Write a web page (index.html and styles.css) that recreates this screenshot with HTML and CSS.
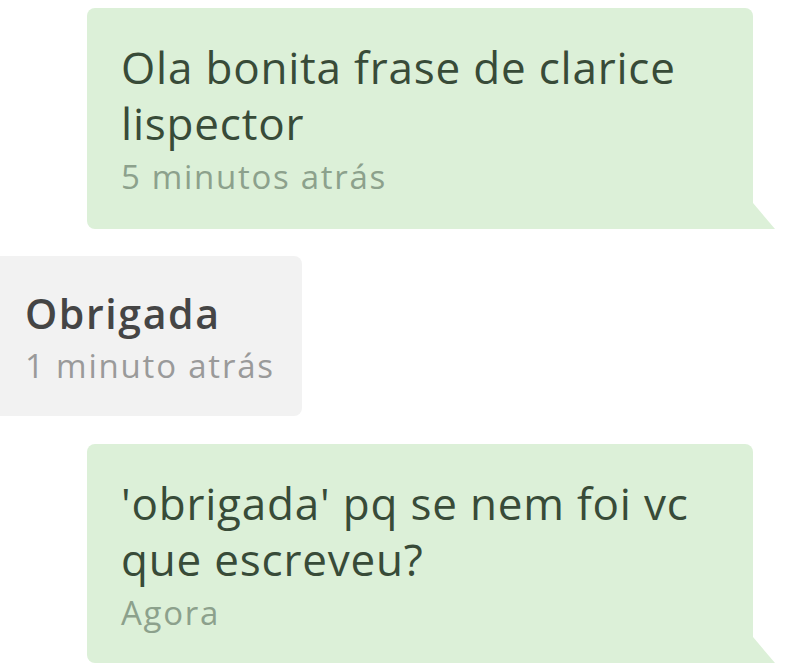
FILE: index.html
```html
<!DOCTYPE html>
<html lang="pt">
<head>
<meta charset="utf-8">
<link rel="stylesheet" href="styles.css">
</head>
<body>
<div class="chat">
  <div class="bubble sent first">
    <p class="msg">Ola bonita frase de clarice<br>lispector</p>
    <p class="time">5 minutos atrás</p>
  </div>
  <div class="bubble recv">
    <p class="msg">Obrigada</p>
    <p class="time">1 minuto atrás</p>
  </div>
  <div class="bubble sent last">
    <p class="msg">'obrigada' pq se nem foi vc<br>que escreveu?</p>
    <p class="time">Agora</p>
  </div>
</div>
</body>
</html>
```
FILE: styles.css
```css
html, body {
  margin: 0;
  padding: 0;
  background: #ffffff;
}
body {
  width: 800px;
  height: 665px;
  overflow: hidden;
  font-family: "Open Sans", "Noto Sans", sans-serif;
}
.chat {
  display: flex;
  flex-direction: column;
  padding-top: 8px;
}
.bubble p {
  margin: 0;
  white-space: nowrap;
}
.sent {
  position: relative;
  margin-left: 87px;
  width: 666px;
  box-sizing: border-box;
  background: #dcf0d8;
  border-radius: 8px 8px 0 8px;
  padding: 31px 34px 26px;
}
.sent::after {
  content: "";
  position: absolute;
  right: -22px;
  bottom: 0;
  width: 0;
  height: 0;
  border-left: 22px solid #dcf0d8;
  border-top: 26px solid transparent;
}
.sent .msg {
  font-size: 44px;
  line-height: 56px;
  font-weight: 500;
  letter-spacing: 0.8px;
  color: #384b38;
}
.sent .time {
  font-size: 33px;
  line-height: 52px;
  letter-spacing: 1.7px;
  color: #8ca18c;
}
.last {
  margin-top: 28px;
  padding-bottom: 24px;
}
.recv {
  margin-top: 27px;
  width: 302px;
  box-sizing: border-box;
  background: #f2f2f2;
  border-radius: 0 8px 8px 0;
  padding: 30px 25px 24px;
}
.recv .msg {
  font-size: 41px;
  line-height: 54px;
  font-weight: 600;
  letter-spacing: 1.6px;
  color: #454545;
}
.recv .time {
  font-size: 33px;
  line-height: 52px;
  letter-spacing: 1.8px;
  color: #9a9a9a;
}
```
